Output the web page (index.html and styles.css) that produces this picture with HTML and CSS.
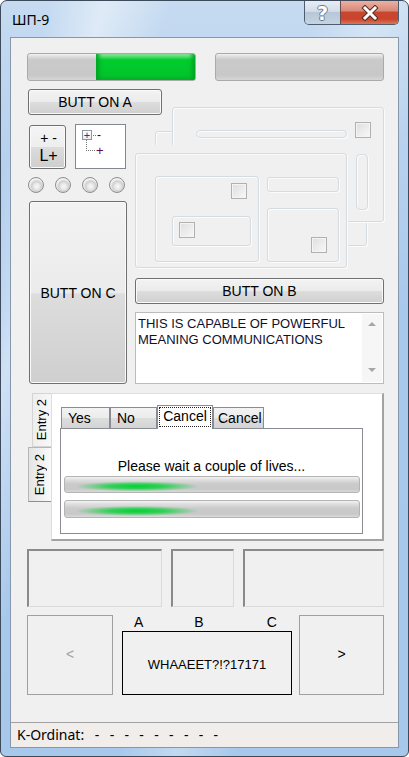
FILE: index.html
```html
<!DOCTYPE html>
<html lang="ru">
<head>
    <meta charset="UTF-8">
    <meta name="viewport" content="width=device-width, initial-scale=1.0">
    <title>ШП-9</title>
    <link rel="stylesheet" href="styles.css">
</head>
<body>
    <div class="window">
        <div class="titlebar">
            <span class="title">ШП-9</span>
            <div class="caption">
                <span class="cap help">?</span>
                <span class="cap close">
                    <svg width="22" height="16" viewBox="0 0 22 16">
                        <path class="x-edge" d="M6 3 L16 13 M16 3 L6 13"/>
                        <path class="x-face" d="M6 3 L16 13 M16 3 L6 13"/>
                    </svg>
                </span>
            </div>
        </div>

        <div class="client">
            <div class="content">
                <div class="bars">
                    <div class="progress"><div class="fill" style="width: 59%"></div></div>
                    <div class="progress"></div>
                </div>

                <div class="main">
                    <div class="col-left">
                        <button class="btn btn-a">BUTT ON A</button>
                        <div class="mini-row">
                            <div class="btn-pm">
                                <span>+ -</span>
                                <span class="big">L+</span>
                            </div>
                            <div class="tree">
                                <div class="node">
                                    <span class="expander">+</span>
                                    <span class="dots"></span>
                                    <span class="node-label">-</span>
                                </div>
                                <div class="node child">
                                    <span class="elbow"></span>
                                    <span class="node-label purple">+</span>
                                </div>
                            </div>
                        </div>
                        <div class="radios">
                            <span class="radio"></span>
                            <span class="radio"></span>
                            <span class="radio"></span>
                            <span class="radio"></span>
                        </div>
                        <button class="btn btn-c">BUTT ON C</button>
                    </div>

                    <div class="col-right">
                        <!-- disabled controls, stacked on top of each other -->
                        <div class="etched">
                            <div class="etch e-small"></div>
                            <div class="etch e-ext"></div>
                            <div class="etch e-frame-a"></div>
                            <div class="etch e-slider-h"></div>
                            <div class="check c1"></div>
                            <div class="etch e-slider-v"></div>
                            <div class="etch e-frame-b"></div>
                            <div class="etch e-inner1"></div>
                            <div class="check c2"></div>
                            <div class="etch e-inner2"></div>
                            <div class="check c3"></div>
                            <div class="etch e-field"></div>
                            <div class="etch e-inner3"></div>
                            <div class="check c4"></div>
                        </div>
                        <button class="btn btn-b">BUTT ON B</button>
                        <div class="memo">
                            <div class="memo-text">THIS IS CAPABLE OF POWERFUL MEANING COMMUNICATIONS</div>
                            <div class="vscroll">
                                <span class="arrow up"></span>
                                <span class="arrow down"></span>
                            </div>
                        </div>
                    </div>
                </div>

                <div class="vtabs">
                    <div class="vtab-strip">
                        <div class="vtab"><span>Entry 2</span></div>
                        <div class="vtab active"><span>Entry 2</span></div>
                    </div>
                    <div class="vtab-page">
                        <div class="tabs">
                            <div class="tab">Yes</div>
                            <div class="tab">No</div>
                            <div class="tab selected"><span class="focus">Cancel</span></div>
                            <div class="tab">Cancel</div>
                        </div>
                        <div class="tab-page">
                            <div class="wait">Please wait a couple of lives...</div>
                            <div class="marquee"></div>
                            <div class="marquee tall"></div>
                        </div>
                    </div>
                </div>

                <div class="groups">
                    <div class="sunken g1"></div>
                    <div class="sunken g2"></div>
                    <div class="sunken g3"></div>
                </div>

                <div class="nav">
                    <div class="nav-btn disabled">&lt;</div>
                    <div class="nav-center">
                        <div class="letters">
                            <span class="la">A</span>
                            <span class="lb">B</span>
                            <span class="lc">C</span>
                        </div>
                        <div class="display">WHAAEET?!?17171</div>
                    </div>
                    <div class="nav-btn next">&gt;</div>
                </div>
            </div>

            <div class="status">K-Ordinat: <span class="dashes">- - - - - - - - -</span></div>
        </div>
    </div>
</body>
</html>
```

FILE: styles.css
```css
* {
    box-sizing: border-box;
}
body {
    margin: 0;
    background: #fff;
    font-family: "Liberation Sans", Arial, sans-serif;
    color: #000;
}
.window {
    width: 409px;
    height: 757px;
    border: 1px solid #3c4a5b;
    border-radius: 7px 7px 6px 6px;
    display: flex;
    flex-direction: column;
    overflow: hidden;
    background:
        linear-gradient(105deg, rgba(255,255,255,0) 8%, rgba(255,255,255,.45) 17%, rgba(255,255,255,0) 28%, rgba(255,255,255,0) 52%, rgba(255,255,255,.3) 62%, rgba(255,255,255,0) 72%),
        linear-gradient(to bottom, #c6dbf1 0, #bed6ef 10%, #a9c9ec 40%, #a7c8eb 100%);
}

/* title bar */
.titlebar {
    height: 36px;
    display: flex;
    align-items: flex-start;
    padding-left: 11px;
}
.title {
    margin-top: 10px;
    font-family: "Noto Sans", sans-serif;
    font-size: 14px;
    line-height: 18px;
}
.caption {
    margin-left: auto;
    margin-right: 9px;
    height: 24px;
    display: flex;
    border: 1px solid #4d5d70;
    border-top: none;
    border-radius: 0 0 5px 5px;
    overflow: hidden;
}
.cap {
    display: flex;
    align-items: center;
    justify-content: center;
    height: 100%;
}
.help {
    width: 35px;
    background: linear-gradient(#e6edf5, #d3dde9 45%, #b7c7d9 50%, #c5d3e3 100%);
    color: #fff;
    font: bold 19px "DejaVu Sans", sans-serif;
    line-height: 20px;
    text-shadow: 1px 0 #6d7c8c, -1px 0 #6d7c8c, 0 1px #6d7c8c, 0 -1px #6d7c8c;
}
.close {
    width: 58px;
    border-left: 1px solid #6c4a47;
    background: linear-gradient(#eab1a3, #d98a77 42%, #c84630 50%, #c9442c 78%, #dc7457 100%);
}
.x-edge {
    stroke: #5a2a24;
    stroke-width: 5;
    stroke-linecap: square;
    fill: none;
}
.x-face {
    stroke: #fff;
    stroke-width: 3;
    stroke-linecap: square;
    fill: none;
}

/* client area */
.client {
    flex: 1;
    margin: 0 9px 8px;
    border: 1px solid #8697ab;
    background: #f0f0f0;
    display: flex;
    flex-direction: column;
}
.content {
    flex: 1;
    padding: 15px 14px 0 16px;
}

/* progress bars */
.bars {
    display: flex;
    gap: 19px;
}
.progress {
    width: 169px;
    height: 28px;
    border: 1px solid #aaaaaa;
    border-radius: 3px;
    overflow: hidden;
    display: flex;
    justify-content: flex-end;
    background: linear-gradient(#f2f2f2 0, #e0e0e0 8%, #cacaca 22%, #c8c8c8 82%, #d6d6d6 100%);
}
.fill {
    height: 100%;
    background: linear-gradient(#b9f3c1 0, #5fe07a 9%, #00cd2e 22%, #00c52b 80%, #06b42c 100%);
    box-shadow: inset 5px 0 4px -2px #01a323, inset -5px 0 4px -2px #01a323;
}

/* buttons */
.btn {
    display: flex;
    align-items: center;
    justify-content: center;
    padding: 0;
    font-family: "Liberation Sans", Arial, sans-serif;
    font-size: 14px;
    color: #000;
    border: 1px solid #707070;
    border-radius: 3px;
    background: linear-gradient(#f3f3f3, #ebebeb 50%, #dddddd 51%, #cfcfcf);
    box-shadow: inset 0 0 0 1px #fafafa;
}

.main {
    margin-top: 8px;
    display: grid;
    grid-template-columns: 108px 249px;
    align-items: start;
}
.col-left {
    display: flex;
    flex-direction: column;
    padding-left: 2px;
}
.btn-a {
    width: 134px;
    height: 26px;
    margin-left: -1px;
}
.mini-row {
    margin-top: 9px;
    display: flex;
    align-items: flex-end;
    gap: 9px;
}
.btn-pm {
    width: 37px;
    height: 44px;
    border: 1px solid #707070;
    border-radius: 3px;
    background: linear-gradient(#f4f4f4, #eeeeee 50%, #dcdcdc 51%, #cecece);
    box-shadow: inset 0 0 0 1px #fafafa;
    display: flex;
    flex-direction: column;
    align-items: center;
    justify-content: center;
    font-size: 14px;
    line-height: 17px;
}
.btn-pm span {
    padding-left: 2px;
}
.btn-pm .big {
    font-size: 16px;
}

/* tree view */
.tree {
    width: 51px;
    height: 45px;
    border: 1px solid #828790;
    background: #fff;
    padding: 5px 0 0 6px;
}
.node {
    display: flex;
    align-items: center;
    height: 10px;
}
.expander {
    width: 10px;
    height: 10px;
    border: 1px solid #8a99a8;
    background: linear-gradient(#fff, #e8edf2);
    color: #1e3f8a;
    font-size: 11px;
    line-height: 8px;
    text-align: center;
}
.dots {
    width: 3px;
    height: 0;
    border-top: 1px dotted #777;
    margin-left: 1px;
}
.node-label {
    font-size: 12px;
    line-height: 10px;
    margin-left: 1px;
    color: #101030;
}
.node.child {
    align-items: flex-end;
    height: 16px;
    padding-left: 4px;
}
.elbow {
    width: 9px;
    height: 11px;
    border-left: 1px dotted #777;
    border-bottom: 1px dotted #777;
    margin-bottom: 5px;
}
.purple {
    color: #5a0a5a;
    font-size: 13px;
    line-height: 11px;
}

/* radio buttons */
.radios {
    margin-top: 8px;
    margin-left: -1px;
    display: flex;
    gap: 11px;
}
.radio {
    width: 16px;
    height: 16px;
    border-radius: 50%;
    border: 1px solid #8d8e8e;
    background: radial-gradient(circle at 55% 60%, #f8f8f8 0, #e8e8e8 3px, #d0d0d0 5px, #dcdcdc 6px, #f0f0f0 7px);
}
.btn-c {
    margin-top: 8px;
    width: 98px;
    height: 183px;
}

/* right column */
.col-right {
    padding-top: 18px;
    display: flex;
    flex-direction: column;
}
.etched {
    position: relative;
    height: 161px;
}
.etch {
    position: absolute;
    border: 1px solid #d4dbe1;
    border-radius: 3px;
    background: #f0f0f0;
    box-shadow: inset 1px 1px 0 #fbfbfb, 1px 1px 0 #fbfbfb;
}
.e-small   { left: 20px;  top: 24px;  width: 40px;  height: 40px; }
.e-ext     { left: 165px; top: 93px;  width: 67px;  height: 46px; }
.e-frame-a { left: 37px;  top: 0;     width: 212px; height: 115px; }
.e-slider-h { left: 61px; top: 23px;  width: 151px; height: 8px; border-radius: 4px; }
.e-slider-v { left: 221px; top: 47px; width: 12px;  height: 56px; border-radius: 4px; }
.e-frame-b {
    left: 0;
    top: 46px;
    width: 212px;
    height: 115px;
    box-shadow: inset 1px 1px 0 #fbfbfb, 1px 1px 0 #fbfbfb, 0 -8px 0 #f0f0f0;
}
.e-inner1 { left: 20px;  top: 69px;  width: 104px; height: 86px; }
.e-inner2 { left: 37px;  top: 109px; width: 79px;  height: 30px; }
.e-field  { left: 132px; top: 70px;  width: 72px;  height: 15px; }
.e-inner3 { left: 132px; top: 101px; width: 72px;  height: 54px; }
.check {
    position: absolute;
    width: 16px;
    height: 16px;
    border: 1px solid #b1b1b1;
    background: linear-gradient(135deg, #dedede, #f8f8f8);
    box-shadow: inset 0 0 0 1px #f4f4f4;
}
.c1 { left: 220px; top: 15px; }
.c2 { left: 96px;  top: 76px; }
.c3 { left: 44px;  top: 115px; }
.c4 { left: 176px; top: 130px; }

.btn-b {
    margin-top: 10px;
    width: 249px;
    height: 26px;
}
.memo {
    margin-top: 8px;
    height: 72px;
    border: 1px solid #bcbcbc;
    background: #fff;
    display: flex;
}
.memo-text {
    flex: 1;
    padding: 3px 0 0 2px;
    font-size: 13px;
    line-height: 16px;
    color: #10102e;
}
.vscroll {
    width: 20px;
    margin: 1px 1px 1px 0;
    background: #f6f6f6;
    display: flex;
    flex-direction: column;
    justify-content: space-between;
    align-items: center;
    padding: 8px 0 10px;
}
.arrow {
    width: 0;
    height: 0;
    border-left: 4px solid transparent;
    border-right: 4px solid transparent;
}
.arrow.up {
    border-bottom: 4px solid #a6a6a6;
}
.arrow.down {
    border-top: 4px solid #a6a6a6;
}

/* vertical tab control */
.vtabs {
    margin-top: 9px;
    height: 148px;
    display: flex;
}
.vtab-strip {
    width: 24px;
    display: flex;
    flex-direction: column;
    align-items: flex-end;
}
.vtab {
    width: 19px;
    height: 54px;
    border: 1px solid #d4d4d4;
    border-right: none;
    background: linear-gradient(to right, #eeeeee, #f8f8f8);
    display: flex;
    align-items: center;
    justify-content: center;
    font-size: 13px;
}
.vtab span {
    writing-mode: vertical-rl;
    transform: rotate(180deg);
    line-height: 16px;
}
.vtab.active {
    width: 23px;
    height: 55px;
    border-color: #b6b6b6;
    border-bottom-color: #8f8f8f;
    background: linear-gradient(to right, #e4e4e4, #fafafa);
}
.vtab-page {
    flex: 1;
    background: #fff;
    border-style: solid;
    border-width: 1px 2px 2px 1px;
    border-color: #dedede #a3a3a3 #a3a3a3 #dedede;
    padding: 11px 0 0 8px;
}
.tabs {
    display: flex;
    align-items: flex-end;
    height: 23px;
    padding-left: 1px;
}
.tab {
    height: 21px;
    border: 1px solid #898c95;
    border-bottom: none;
    background: linear-gradient(#f3f3f3, #ebebeb 50%, #dddddd 51%, #d4d4d4);
    font-size: 14px;
    line-height: 20px;
    padding-left: 6px;
}
.tab:nth-child(1) { width: 49px; }
.tab:nth-child(2) { width: 47px; }
.tab:nth-child(4) { width: 51px; padding-left: 4px; }
.tab.selected {
    width: 56px;
    height: 24px;
    margin-bottom: -1px;
    position: relative;
    z-index: 1;
    background: #fff;
    padding: 1px 1px 2px 1px;
}
.focus {
    display: block;
    height: 100%;
    border: 1px dotted #222;
    line-height: 17px;
    text-align: center;
}
.tab-page {
    width: 303px;
    height: 106px;
    border: 1px solid #898c95;
    background: #fff;
    padding: 29px 0 0 3px;
}
.wait {
    font-size: 14px;
    line-height: 16px;
    text-align: center;
    padding-right: 3px;
}
.marquee {
    margin-top: 2px;
    width: 296px;
    height: 17px;
    border: 1px solid #b4b4b4;
    border-radius: 3px;
    background:
        radial-gradient(ellipse 62px 5px at 72px 62%, #00d232 0, rgba(0,210,50,.75) 45%, rgba(0,210,50,0) 100%),
        linear-gradient(#f2f2f2 0, #dedede 20%, #cbcbcb 45%, #c8c8c8 80%, #d9d9d9 100%);
}
.marquee.tall {
    margin-top: 7px;
    height: 18px;
}

/* empty sunken panels */
.groups {
    margin-top: 8px;
    display: flex;
    gap: 9px;
    height: 58px;
}
.sunken {
    height: 100%;
    border-style: solid;
    border-width: 2px 1px 1px 2px;
    border-color: #8a8a8a #dadada #dadada #8a8a8a;
}
.g1 { width: 135px; }
.g2 { width: 63px; }
.g3 { width: 141px; }

/* bottom navigation */
.nav {
    margin-top: 8px;
    height: 80px;
    display: flex;
}
.nav-btn {
    width: 86px;
    border: 1px solid #a0a0a0;
    display: flex;
    align-items: center;
    justify-content: center;
    font-size: 14px;
    padding-bottom: 2px;
}
.nav-btn.disabled {
    color: #a0a0a0;
}
.nav-btn.next {
    width: 85px;
    margin-left: 7px;
}
.nav-center {
    width: 170px;
    margin-left: 9px;
    display: flex;
    flex-direction: column;
}
.letters {
    height: 16px;
    display: flex;
    font-size: 14px;
    line-height: 14px;
}
.la { margin-left: 12px; }
.lb { margin-left: 51px; }
.lc { margin-left: 63px; }
.display {
    flex: 1;
    border: 1px solid #000;
    display: flex;
    align-items: center;
    justify-content: center;
    font-size: 13px;
    padding-top: 2px;
}

/* status bar */
.status {
    height: 25px;
    border-top: 1px solid #a2a2a2;
    background: #f0edeb;
    padding-left: 6px;
    font-family: "Noto Sans", sans-serif;
    font-size: 14px;
    line-height: 23px;
}
.dashes {
    margin-left: 7px;
    word-spacing: 6.7px;
}
```
